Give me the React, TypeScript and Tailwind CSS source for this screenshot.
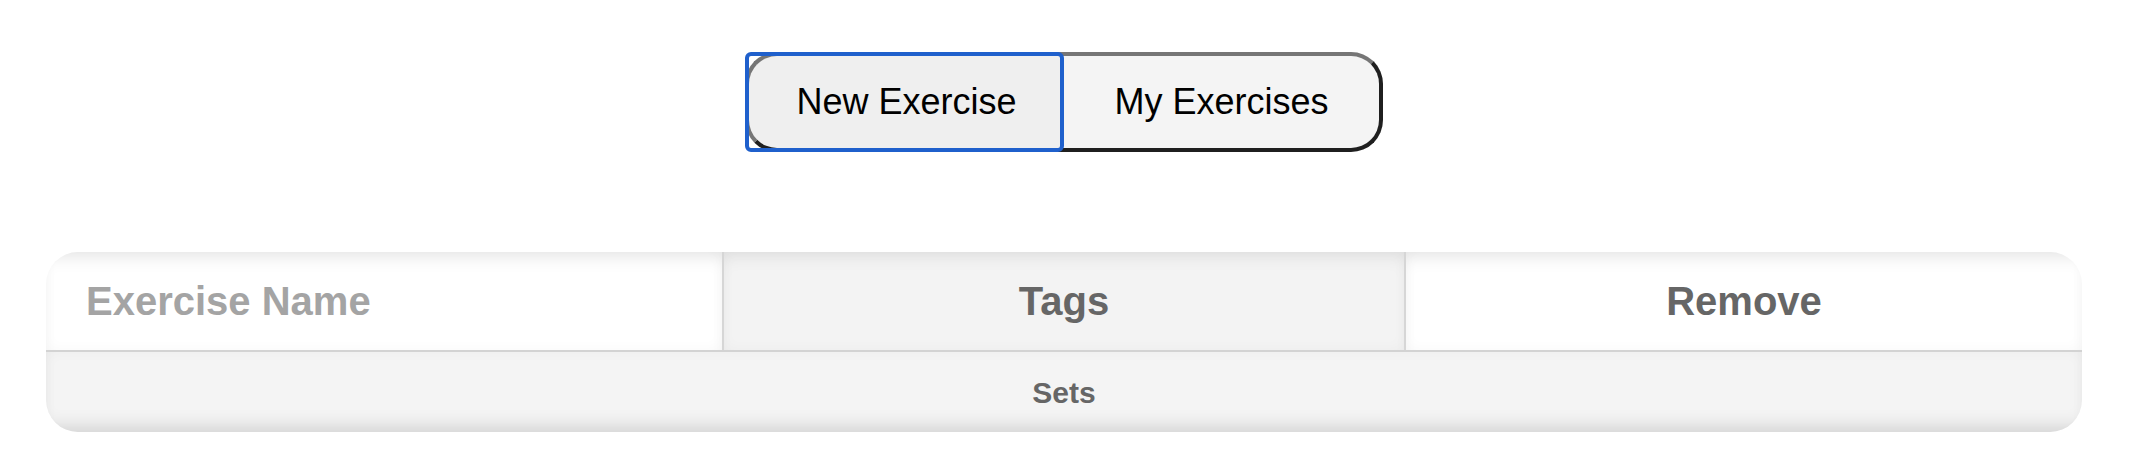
export default function App() {
  return (
    <div className="w-[2128px] bg-white pt-[52px] pb-[38px] font-['Liberation_Sans',Arial,sans-serif]">
      <div className="flex justify-center">
        <div className="flex">
          <div className="relative">
            <button className="flex h-[100px] w-[319px] items-center justify-center rounded-l-[32px] border-[4px] border-r-0 border-t-[#767676] border-l-[#767676] border-b-[#1f1f1f] bg-[#efefef] text-[36px] leading-none text-black">
              New Exercise
            </button>
            <span className="pointer-events-none absolute inset-0 rounded-[6px] border-[4px] border-[#1f60cc]" />
          </div>
          <button className="flex h-[100px] w-[319px] items-center justify-center rounded-r-[32px] border-[4px] border-l-0 border-t-[#767676] border-r-[#1f1f1f] border-b-[#1f1f1f] bg-[#f4f4f4] text-[36px] leading-none text-black">
            My Exercises
          </button>
        </div>
      </div>
      <div className="mx-[46px] mt-[100px] overflow-hidden rounded-[32px]">
        <div className="grid grid-cols-[678px_682px_1fr] border-b-2 border-[#d3d3d3]">
          <div className="flex h-[98px] items-center border-r-2 border-[#d6d6d6] bg-white pl-[40px] text-[40px] font-bold text-[#a4a4a4] shadow-[inset_0_12px_18px_-8px_rgba(0,0,0,0.1),inset_0_0_14px_rgba(0,0,0,0.03)]">
            Exercise Name
          </div>
          <div className="flex h-[98px] items-center justify-center border-r-2 border-[#d6d6d6] bg-[#f3f3f3] text-[40px] font-bold text-[#666666] shadow-[inset_0_12px_18px_-8px_rgba(0,0,0,0.08),inset_0_0_14px_rgba(0,0,0,0.03)]">
            Tags
          </div>
          <div className="flex h-[98px] items-center justify-center bg-white text-[40px] font-bold text-[#666666] shadow-[inset_0_12px_18px_-8px_rgba(0,0,0,0.1),inset_0_0_14px_rgba(0,0,0,0.03)]">
            Remove
          </div>
        </div>
        <div className="flex h-[80px] items-center justify-center bg-[#f4f4f4] text-[30px] font-bold text-[#666666] shadow-[inset_0_-14px_18px_-8px_rgba(0,0,0,0.12),inset_0_0_14px_rgba(0,0,0,0.03)]">
          Sets
        </div>
      </div>
    </div>
  );
}
